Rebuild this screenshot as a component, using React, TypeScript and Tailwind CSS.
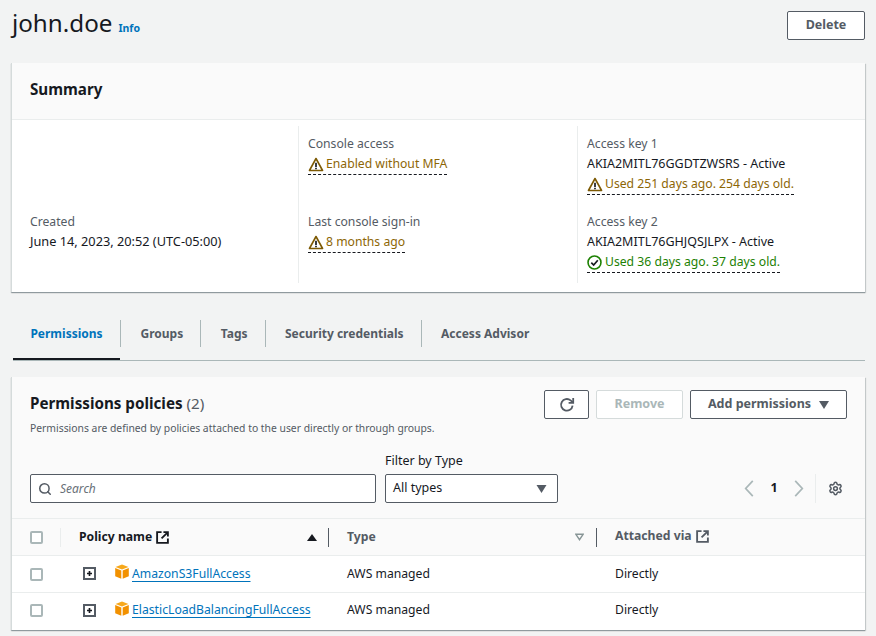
import React from "react";
import { Search, Settings } from "lucide-react";

const font = "font-['Noto_Sans','Open_Sans',sans-serif]";

function Warn() {
  return (
    <svg viewBox="0 0 16 16" className="w-[16px] h-[15px] shrink-0 mr-[2px]" fill="none" stroke="#7d5a04" strokeWidth="1.7" strokeLinejoin="round">
      <path d="M8 1.6 1 14.4h14L8 1.6Z" />
      <path d="M8 6v4.6M8 11.5v1.6" stroke="#16191f" strokeWidth="1.8" />
    </svg>
  );
}

function Ok() {
  return (
    <svg viewBox="0 0 16 16" className="w-[15px] h-[15px] shrink-0 mr-[3px]" fill="none" stroke="#1d8102" strokeWidth="1.7">
      <circle cx="8" cy="8" r="6.9" />
      <path d="M4.6 8.2 7.1 10.7 11.5 5.6" stroke="#16191f" strokeWidth="1.8" />
    </svg>
  );
}

function Status({ kind, children }: { kind: "warn" | "ok"; children: React.ReactNode }) {
  return (
    <div className={`inline-flex items-center h-[20px] border-b border-dashed border-[#16191f] text-[12.2px] ${kind === "warn" ? "text-[#8d6605]" : "text-[#1d8102]"}`}>
      {kind === "warn" ? <Warn /> : <Ok />}
      {children}
    </div>
  );
}

function Label({ children }: { children: React.ReactNode }) {
  return <div className="text-[12.2px] leading-[18px] text-[#545b64]">{children}</div>;
}

function Box() {
  return (
    <svg viewBox="0 0 14 15" className="w-[14px] h-[15px] shrink-0">
      <path d="M7 .5 13.5 3 7 5.6.5 3 7 .5Z" fill="#f7a81b" />
      <path d="M.2 4 6.3 6.5V14.8L.2 12.2V4Z" fill="#f29100" />
      <path d="M13.8 4 7.7 6.5V14.8l6.1-2.6V4Z" fill="#f29100" />
    </svg>
  );
}

function Expand() {
  return (
    <span className="w-[13px] h-[13px] border-2 border-[#545b64] flex items-center justify-center">
      <svg viewBox="0 0 6 6" className="w-[5px] h-[5px]" fill="none" stroke="#16191f" strokeWidth="2">
        <path d="M3 0v6M0 3h6" />
      </svg>
    </span>
  );
}

function Check() {
  return <span className="w-[13px] h-[13px] rounded-[2px] border-2 border-[#aab7b8] bg-white shrink-0" />;
}

// boxy external-link glyph from the console table headers
function External({ color }: { color: string }) {
  return (
    <svg viewBox="0 0 14 14" className="w-[13px] h-[13px] ml-[4px] shrink-0" fill="none" stroke={color} strokeWidth="2">
      <path d="M6 1.2H1.2v11.6h11.6V8" />
      <path d="M8 1.2h4.8V6M12.6 1.4 6 8" />
    </svg>
  );
}

function Row({ name, last }: { name: string; last?: boolean }) {
  return (
    <div className={`flex items-center h-[37px] text-[12.2px] text-[#16191f] ${last ? "pb-[2px]" : "border-b border-[#eaeded]"}`}>
      <div className="w-[49px] pl-[18px] flex"><Check /></div>
      <div className="w-[285px] flex items-center pl-[22px]">
        <Expand />
        <span className="ml-[19px] mr-[3px] -mt-[4px]"><Box /></span>
        <a className="text-[#0073bb] underline underline-offset-[3px]">{name}</a>
      </div>
      <div className="w-[268px] pl-[1px]">AWS managed</div>
      <div className="pl-[1px]">Directly</div>
    </div>
  );
}

const tabs = ["Groups", "Tags", "Security credentials", "Access Advisor"];

export default function App() {
  return (
    <div className={`w-[876px] h-[636px] overflow-hidden bg-[#f2f3f3] text-[#16191f] ${font}`}>
      <div className="flex items-center justify-between h-[63px] pl-[12px] pr-[11px] pb-[13px]">
        <div className="flex items-baseline -mt-[4px]">
          <h1 className="text-[24.2px] leading-[30px]">john.doe</h1>
          <a className="ml-[6px] text-[10.5px] font-bold text-[#0073bb]">Info</a>
        </div>
        <button className="w-[78px] h-[29px] border border-[#545b64] rounded-[2px] bg-white text-[12.5px] font-bold text-[#545b64]">Delete</button>
      </div>

      {/* Summary */}
      <section className="ml-[11px] w-[854px] h-[229px] bg-white border-l border-[#d5dbdb] shadow-[0_1px_1px_0_rgba(0,28,36,0.3),1px_1px_1px_0_rgba(0,28,36,0.15)]">
        <div className="h-[57px] flex items-center pl-[18px] pb-[4px] bg-[#fafafa] border-b border-[#eaeded]">
          <h2 className="text-[15.2px] font-bold">Summary</h2>
        </div>
        <div className="grid grid-cols-[286px_279px_1fr] h-[157px] mt-[6px]">
          <div className="pl-[18px] flex flex-col justify-end pb-[33px]">
            <Label>Created</Label>
            <div className="mt-[1px] text-[12.75px] leading-[18px]">June 14, 2023, 20:52 (UTC-05:00)</div>
          </div>
          <div className="border-l border-[#eaeded] pl-[9px] pt-[9px]">
            <Label>Console access</Label>
            <div className="mt-[1px]"><Status kind="warn">Enabled without MFA</Status></div>
            <div className="mt-[35px]"><Label>Last console sign-in</Label></div>
            <div className="mt-[1px]"><Status kind="warn">8 months ago</Status></div>
          </div>
          <div className="border-l border-[#eaeded] pl-[9px] pt-[9px]">
            <Label>Access key 1</Label>
            <div className="mt-[1px] text-[12.5px] leading-[20px]">AKIA2MITL76GGDTZWSRS - Active</div>
            <Status kind="warn">Used 251 days ago. 254 days old.</Status>
            <div className="mt-[15px]"><Label>Access key 2</Label></div>
            <div className="mt-[1px] text-[12.5px] leading-[20px]">AKIA2MITL76GHJQSJLPX - Active</div>
            <Status kind="ok">Used 36 days ago. 37 days old.</Status>
          </div>
        </div>
      </section>

      {/* Tabs */}
      <div className="ml-[13px] mt-[26px] w-[852px] h-[43px] flex border-b border-[#aab7b8] text-[12px] font-bold text-[#545b64]">
        <div className="w-[107px] h-[42px] border-b-2 border-[#16191f] flex justify-center text-[#0073bb] pt-[2px]">
          <span className="h-[27px] flex items-center">Permissions</span>
        </div>
        {tabs.map((t) => (
          <div key={t} className="flex h-[27px] mt-[2px] items-center pl-[19.5px] pr-[17px] border-l border-[#aab7b8]">{t}</div>
        ))}
      </div>

      {/* Permissions policies */}
      <section className="ml-[11px] mt-[16px] w-[854px] h-[253px] bg-white border-l border-[#d5dbdb] shadow-[0_1px_1px_0_rgba(0,28,36,0.3),1px_1px_1px_0_rgba(0,28,36,0.15)]">
        <div className="h-[142px] bg-[#fafafa] border-b border-[#eaeded] pl-[18px] pr-[18px] pt-[13px]">
          <div className="flex justify-between">
            <div>
              <h2 className="text-[15.2px] font-bold leading-[28px] mt-[-1px]">
                Permissions policies <span className="font-normal text-[#545b64]">(2)</span>
              </h2>
              <p className="text-[10.35px] leading-[14px] text-[#545b64] mt-[4px]">Permissions are defined by policies attached to the user directly or through groups.</p>
            </div>
            <div className="flex gap-[7px] h-[29px] text-[12.5px] font-bold">
              <button className="w-[45px] border border-[#545b64] rounded-[2px] bg-white flex items-center justify-center text-[#545b64]">
                <svg viewBox="0 0 16 16" className="w-[16px] h-[16px]" fill="none" stroke="#545b64" strokeWidth="1.8">
                  <path d="M13.6 8.6A5.8 5.8 0 1 1 11.6 3.4L14 5.4" />
                  <path d="M14.2 1v4.8H9.6" />
                </svg>
              </button>
              <button className="w-[87px] border border-[#d5dbdb] rounded-[2px] bg-white text-[#aab7b8]">Remove</button>
              <button className="w-[157px] border border-[#545b64] rounded-[2px] bg-white text-[#545b64] flex items-center justify-center gap-[8px]">
                Add permissions
                <svg viewBox="0 0 10 8" className="w-[10px] h-[8px]"><path d="M0 0h10L5 8Z" fill="#545b64" /></svg>
              </button>
            </div>
          </div>
          <div className="flex items-end mt-[17px]">
            <div className="w-[346px] h-[29px] bg-white border border-[#545b64] rounded-[2px] flex items-center pl-[7px]">
              <Search size={14} strokeWidth={2.6} className="text-[#545b64]" />
              <span className="ml-[8px] text-[12px] italic text-[#687078]">Search</span>
            </div>
            <div className="ml-[9px]">
              <div className="text-[12.5px] leading-[18px] mb-[4px]">Filter by Type</div>
              <div className="w-[173px] h-[29px] bg-white border border-[#545b64] rounded-[2px] flex items-center justify-between pl-[7px] pr-[10px] text-[12.5px]">
                All types
                <svg viewBox="0 0 10 8" className="w-[11px] h-[8px]"><path d="M0 0h10L5 8Z" fill="#545b64" /></svg>
              </div>
            </div>
            <div className="ml-auto h-[29px] flex items-center">
              <svg viewBox="0 0 10 18" className="w-[10px] h-[17px]" fill="none" stroke="#aab7b8" strokeWidth="1.8"><path d="M9 1 1.5 9 9 17" /></svg>
              <span className="w-[40px] text-center text-[12.5px] font-bold">1</span>
              <svg viewBox="0 0 10 18" className="w-[10px] h-[17px]" fill="none" stroke="#aab7b8" strokeWidth="1.8"><path d="M1 1 8.5 9 1 17" /></svg>
              <span className="ml-[11px] h-[29px] border-l border-[#eaeded] pl-[12px] flex items-center pr-[4px]">
                <Settings size={15} strokeWidth={2.4} className="text-[#545b64]" />
              </span>
            </div>
          </div>
        </div>

        {/* table */}
        <div className="flex items-center h-[37px] bg-[#fafafa] border-b border-[#eaeded] text-[12.2px] font-bold text-[#545b64]">
          <div className="w-[49px] pl-[18px] flex h-[19px] items-center border-r border-[#eaeded]"><Check /></div>
          <div className="w-[268px] h-[19px] flex items-center pl-[18px] pr-[11px] border-r border-[#545b64]">
            <span className="text-[#16191f]">Policy name</span>
            <External color="#16191f" />
            <svg viewBox="0 0 10 7" className="w-[10px] h-[7px] ml-auto"><path d="M5 0l5 7H0Z" fill="#16191f" /></svg>
          </div>
          <div className="w-[268px] h-[19px] flex items-center pl-[18px] pr-[12px] border-r border-[#545b64]">
            Type
            <svg viewBox="0 0 10 8" className="w-[9px] h-[8px] ml-auto"><path d="M1 1h8L5 7Z" fill="none" stroke="#879596" strokeWidth="1.6" /></svg>
          </div>
          <div className="flex items-center pl-[18px] -mt-[1px]">
            Attached via
            <External color="#545b64" />
          </div>
        </div>
        <Row name="AmazonS3FullAccess" />
        <Row name="ElasticLoadBalancingFullAccess" last />
      </section>
    </div>
  );
}
